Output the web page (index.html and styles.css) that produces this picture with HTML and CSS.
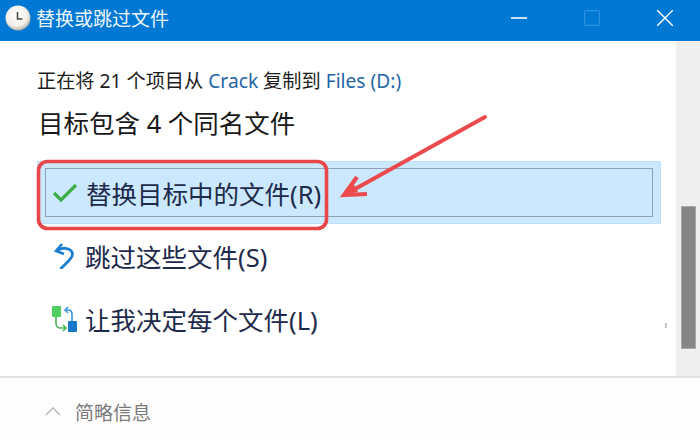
FILE: index.html
```html
<!DOCTYPE html>
<html lang="zh-CN">
<head>
<meta charset="utf-8">
<title>替换或跳过文件</title>
<link rel="stylesheet" href="styles.css">
</head>
<body>
<div class="window">
  <header class="titlebar">
    <svg class="clock" viewBox="0 0 26 26" width="26" height="26">
      <defs><radialGradient id="cg" cx="45%" cy="40%" r="60%"><stop offset="0" stop-color="#ffffff"/><stop offset="0.7" stop-color="#f3f0ea"/><stop offset="1" stop-color="#b9b2a6"/></radialGradient></defs>
      <circle cx="13" cy="13" r="12.5" fill="url(#cg)"/>
      <path d="M12.5 7v7h5" fill="none" stroke="#4a4a4a" stroke-width="1.6"/>
    </svg>
    <span class="title">替换或跳过文件</span>
    <div class="controls">
      <svg class="ctl" viewBox="0 0 16 16" width="16" height="16"><path d="M0 8h16" stroke="#fff" stroke-width="1.6"/></svg>
      <svg class="ctl" viewBox="0 0 16 16" width="16" height="16"><rect x="0.6" y="0.6" width="14.8" height="14.8" rx="1" fill="none" stroke="#2f8fe0" stroke-width="1.2"/></svg>
      <svg class="ctl" viewBox="0 0 16 16" width="16" height="16"><path d="M0 0l16 16M16 0L0 16" stroke="#fff" stroke-width="1.4"/></svg>
    </div>
  </header>
  <div class="main">
    <section class="content">
      <p class="status">正在将 21 个项目从 <span class="link">Crack</span> 复制到 <span class="link">Files (D:)</span></p>
      <h1 class="heading">目标包含 4 个同名文件</h1>
      <div class="option selected">
        <div class="focus">
          <svg class="icon" viewBox="0 0 26 26" width="26" height="26"><path d="M2 13l7 7L24 5" fill="none" stroke="#3fae49" stroke-width="3.2"/></svg>
          <span>替换目标中的文件(R)</span>
        </div>
      </div>
      <div class="option">
        <div class="plain">
          <svg class="icon" viewBox="0 0 26 26" width="26" height="26"><path d="M11 1L5 8l8 3" fill="none" stroke="#1b7fd0" stroke-width="2.6"/><path d="M5.5 7.6C12 3.5 21 5 21.5 11c.3 4-6 9-12 15" fill="none" stroke="#1b7fd0" stroke-width="2.8"/></svg>
          <span>跳过这些文件(S)</span>
        </div>
      </div>
      <div class="option">
        <div class="plain">
          <svg class="icon" viewBox="0 0 26 26" width="26" height="26">
            <rect x="1" y="0" width="9" height="11" rx="1" fill="#4fcf5f"/>
            <rect x="17" y="15" width="9" height="11" rx="1" fill="#1577c9"/>
            <path d="M5 11v6c0 3 2 5 4 5h6M12 19l3 3-3 3" fill="none" stroke="#4cb85a" stroke-width="1.7"/>
            <path d="M21 15V8c0-3-2-4-4-4h-3M17 1l-3 3 3 3" fill="none" stroke="#3d9be0" stroke-width="1.7"/>
          </svg>
          <span>让我决定每个文件(L)</span>
        </div>
      </div>
    </section>
    <div class="scrollbar"><div class="thumb"></div></div>
  </div>
  <footer class="footer">
    <svg class="chev" viewBox="0 0 16 10" width="16" height="10"><path d="M1 9l7-7 7 7" fill="none" stroke="#b4b4b4" stroke-width="1.3"/></svg>
    <span>简略信息</span>
  </footer>
  <svg class="annot" viewBox="0 0 700 440" width="700" height="440">
    <rect x="38.5" y="161.5" width="288" height="67" rx="9" fill="none" stroke="#e8474a" stroke-width="3.6"/>
    <path d="M485 117L346 194" fill="none" stroke="#ec4a4c" stroke-width="4" stroke-linecap="round"/>
    <path d="M357 177L344 195L367 194" fill="none" stroke="#ec4a4c" stroke-width="4.2"/>
    <path d="M344 195L353 183L358 192Z" fill="#ec4a4c"/>
    <rect x="665" y="323" width="1.6" height="5" fill="#b5b5b5"/>
  </svg>
</div>
</body>
</html>
```
FILE: styles.css
```css
* { box-sizing: border-box; }
html, body { margin: 0; padding: 0; background: #fff; }
body { font-family: "Liberation Sans", "Noto Sans CJK SC", sans-serif; }
.window { position: relative; width: 700px; height: 440px; display: flex; flex-direction: column; overflow: hidden; }
.titlebar { height: 41px; flex: none; background: #0078d4; display: flex; align-items: center; padding: 0 27px 5px 5px; color: #eef6fd; }
.clock { flex: none; margin-right: 5px; }
.title { font-family: "Noto Sans CJK SC", sans-serif; font-size: 19px; line-height: 26px; }
.controls { margin-left: auto; display: flex; gap: 57px; }
.ctl { display: block; }
.main { flex: none; height: 335px; display: flex; }
.content { flex: 1; padding: 27px 15px 0 37px; }
.status { margin: 0; font-family: "Noto Sans", "Noto Sans CJK SC", sans-serif; font-size: 19.2px; line-height: 26px; color: #1c1c1c; }
.link { color: #1f66a8; }
.heading { margin: 13px 0 0 1px; font-family: "Noto Sans", "Noto Sans CJK SC", sans-serif; font-weight: 400; font-size: 25.5px; line-height: 32px; color: #181818; }
.option { height: 63px; font-family: "Noto Sans", "Noto Sans CJK SC", sans-serif; font-size: 25.5px; color: #1d2a4a; }
.option.selected { margin-top: 22px; background: #cce8ff; border: 1px solid #bfe0fb; padding: 6px 7px; }
.focus { height: 49px; border: 1px solid #8da2b3; display: flex; align-items: center; padding-left: 6px; gap: 8px; }
.plain { height: 100%; display: flex; align-items: center; padding-left: 14px; gap: 8px; }
.icon { flex: none; }
.scrollbar { width: 24px; flex: none; background: #efefef; padding: 165px 4px 0 5px; }
.thumb { height: 143px; background: #868686; border: 1px solid #a8a8a8; }
.footer { flex: 1; border-top: 2px solid #e3e3e3; background: #fdfdfd; display: flex; align-items: center; padding: 4px 0 0 45px; gap: 14px; font-family: "Noto Sans CJK SC", sans-serif; font-size: 19px; color: #7a7a7a; }
.annot { position: absolute; left: 0; top: 0; pointer-events: none; }
```
